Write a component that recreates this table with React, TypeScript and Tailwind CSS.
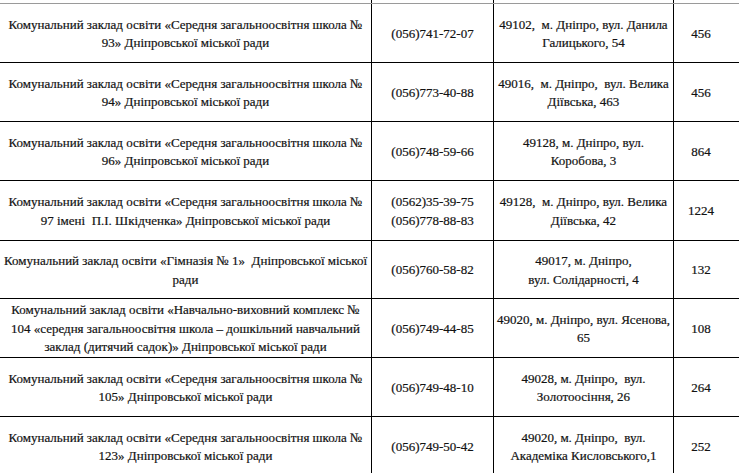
import React from "react";

type Row = {
  name: string[];
  phone: string[];
  address: string[];
  count: string;
  h: string;
};

const rows: Row[] = [
  {
    name: ["Комунальний заклад освіти «Середня загальноосвітня школа №", "93» Дніпровської міської ради"],
    phone: ["(056)741-72-07"],
    address: ["49102,  м. Дніпро, вул. Данила", "Галицького, 54"],
    count: "456",
    h: "h-[59px]",
  },
  {
    name: ["Комунальний заклад освіти «Середня загальноосвітня школа №", "94» Дніпровської міської ради"],
    phone: ["(056)773-40-88"],
    address: ["49016,  м. Дніпро,  вул. Велика", "Діївська, 463"],
    count: "456",
    h: "h-[59px]",
  },
  {
    name: ["Комунальний заклад освіти «Середня загальноосвітня школа №", "96» Дніпровської міської ради"],
    phone: ["(056)748-59-66"],
    address: ["49128, м. Дніпро, вул.", "Коробова, 3"],
    count: "864",
    h: "h-[59px]",
  },
  {
    name: ["Комунальний заклад освіти «Середня загальноосвітня школа №", "97 імені  П.І. Шкідченка» Дніпровської міської ради"],
    phone: ["(0562)35-39-75", "(056)778-88-83"],
    address: ["49128,  м. Дніпро, вул. Велика", "Діївська, 42"],
    count: "1224",
    h: "h-[60px]",
  },
  {
    name: ["Комунальний заклад освіти «Гімназія № 1»  Дніпровської міської", "ради"],
    phone: ["(056)760-58-82"],
    address: ["49017, м. Дніпро,", "вул. Солідарності, 4"],
    count: "132",
    h: "h-[58px]",
  },
  {
    name: [
      "Комунальний заклад освіти «Навчально-виховний комплекс №",
      "104 «середня загальноосвітня школа – дошкільний навчальний",
      "заклад (дитячий садок)» Дніпровської міської ради",
    ],
    phone: ["(056)749-44-85"],
    address: ["49020, м. Дніпро, вул. Ясенова,", "65"],
    count: "108",
    h: "h-[59px]",
  },
  {
    name: ["Комунальний заклад освіти «Середня загальноосвітня школа №", "105» Дніпровської міської ради"],
    phone: ["(056)749-48-10"],
    address: ["49028, м. Дніпро,  вул.", "Золотоосіння, 26"],
    count: "264",
    h: "h-[59px]",
  },
  {
    name: ["Комунальний заклад освіти «Середня загальноосвітня школа №", "123» Дніпровської міської ради"],
    phone: ["(056)749-50-42"],
    address: ["49020, м. Дніпро,  вул.", "Академіка Кисловського,1"],
    count: "252",
    h: "h-[59px]",
  },
];

const Lines: React.FC<{ lines: string[] }> = ({ lines }) => (
  <div>
    {lines.map((l, i) => (
      <span key={i} className="block whitespace-pre">
        {l}
      </span>
    ))}
  </div>
);

export default function App() {
  return (
    <div className="w-[739px] h-[473px] overflow-hidden bg-white text-[#121212] text-[13px] leading-[18.5px] [font-family:'Liberation_Serif',serif] [-webkit-text-stroke:0.2px_#121212]">
      {/* top strip: continuation of the table above */}
      <div className="grid grid-cols-[372px_122px_180px_65px] h-[4px] border-b border-[#9a9a9a]">
        <div className="border-r border-black" />
        <div className="border-r border-black" />
        <div className="border-r border-black" />
        <div />
      </div>
      {rows.map((r, i) => (
        <div key={i} className={`grid grid-cols-[372px_122px_180px_65px] border-b border-black ${r.h}`}>
          <div className="flex items-center justify-center text-center border-r border-black pt-[2px]">
            <Lines lines={r.name} />
          </div>
          <div className="flex items-center justify-center text-center border-r border-black pt-[2px]">
            <Lines lines={r.phone} />
          </div>
          <div className="flex items-center justify-center text-center border-r border-black pt-[2px]">
            <Lines lines={r.address} />
          </div>
          <div className="flex items-center justify-center text-center pr-[11px] pt-[2px]">{r.count}</div>
        </div>
      ))}
    </div>
  );
}
